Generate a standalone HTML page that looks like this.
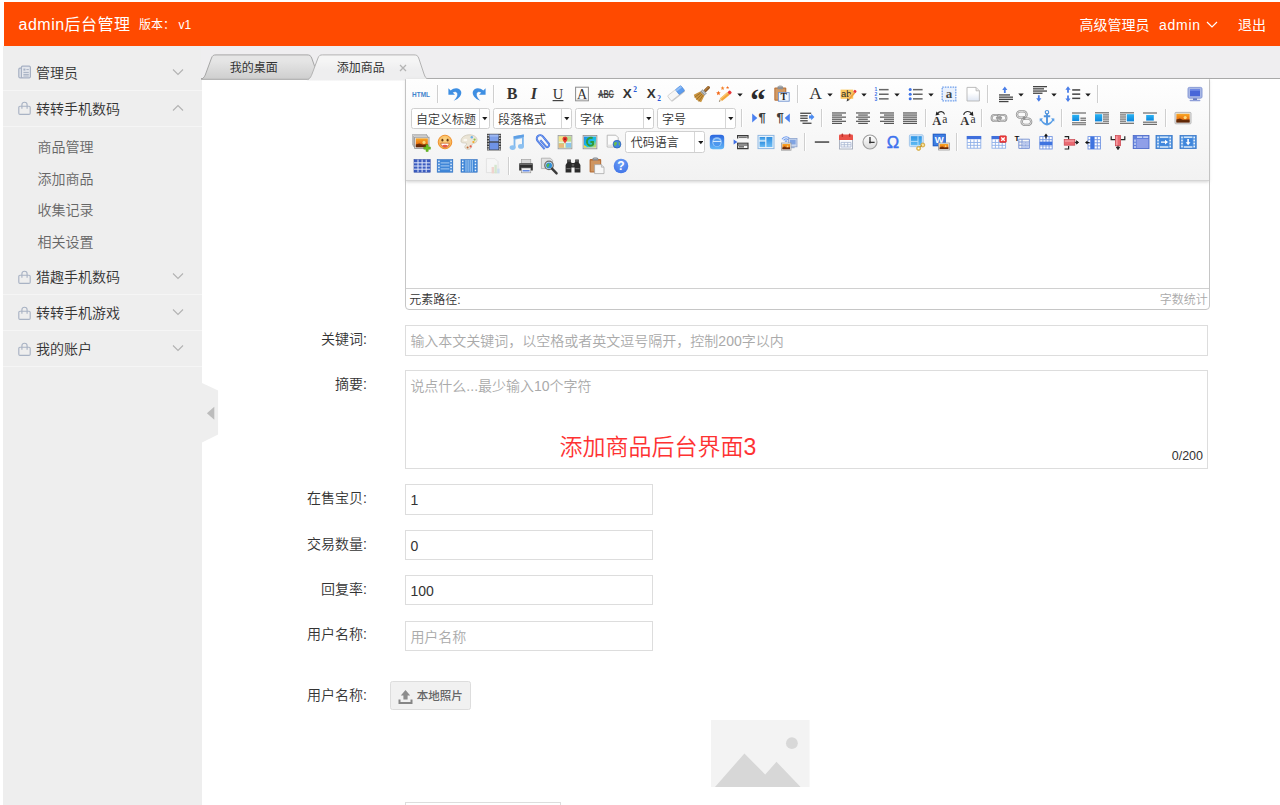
<!DOCTYPE html>
<html lang="zh-CN">
<head>
<meta charset="utf-8">
<title>admin后台管理</title>
<style>
*{box-sizing:border-box;margin:0;padding:0}
html,body{width:1280px;height:805px;overflow:hidden;background:#fff}
body{font-family:"Liberation Sans","Noto Sans CJK SC",sans-serif;font-size:14px;font-weight:350;color:#333;position:relative}
.abs{position:absolute}
/* header */
#hd{font-weight:400;position:absolute;left:3.5px;top:2px;width:1277px;height:43.5px;background:#ff4a00;color:#fff}
#hd .logo{position:absolute;left:15px;top:1px;height:43.5px;line-height:44px;font-size:16px;letter-spacing:.5px;white-space:nowrap}
#hd .ver{position:absolute;left:135.5px;top:1.2px;line-height:44px;font-size:12px;white-space:nowrap}
#hd .usr{position:absolute;top:0.8px;line-height:44px;font-size:14px;white-space:nowrap}
/* sidebar */
#side{position:absolute;left:3.4px;top:45.5px;width:198.2px;height:760px;background:#eeeeee}
#side .dt{position:absolute;left:0;width:100%;height:36px;line-height:36px;border-bottom:1px solid #f5f5f5;color:#333;font-size:14px;white-space:nowrap}
#side .dt span{position:absolute;left:32.6px;top:0}
#side .dt svg.ic{position:absolute;left:15px;top:10.5px}
#side .dt svg.ar{position:absolute;left:169px;top:13px}
#side .dd{position:absolute;left:34px;font-size:14px;color:#666;line-height:20px;white-space:nowrap}
/* tab bar */
#tabbar{position:absolute;left:201.25px;top:45.5px;width:1079px;height:33.8px;background:#efeef0;border-bottom:1px solid #a9a9a9}
#tabbar svg{position:absolute;left:0;top:0}
#tabbar .t{font-weight:400;margin-top:.5px;position:absolute;font-size:12px;line-height:16px;color:#333;white-space:nowrap}
/* content */
.lab{position:absolute;width:120px;text-align:right;font-size:14px;color:#333;line-height:20px;white-space:nowrap}
.inp{position:absolute;border:1px solid #ddd;background:#fff;font-size:14px;line-height:20px;padding:5px 4.2px;color:#333;white-space:nowrap}
.ph{color:#aaa}
</style>
</head>
<body>
<div id="hd">
  <div class="logo">admin后台管理</div>
  <div class="ver">版本：<span style="margin-left:3.5px">v1</span></div>
  <div class="usr" style="left:1076px">高级管理员</div>
  <div class="usr" style="left:1155.5px;letter-spacing:.75px">admin</div>
  <svg class="abs" style="left:1202.6px;top:18.6px" width="12" height="8" viewBox="0 0 12 8"><path d="M1 1 L6 6 L11 1" fill="none" stroke="#fff" stroke-width="1.2"/></svg>
  <div class="usr" style="left:1234.5px">退出</div>
</div>

<div id="side">
  <div class="dt" style="top:9.1px"><svg class="ic" width="13" height="14" viewBox="0 0 13 14"><path d="M4.6 1.2h6.6a1.2 1.2 0 0 1 1.2 1.2v9.2a1.2 1.2 0 0 1 -1.2 1.2h-6.6a1.2 1.2 0 0 1 -1.2 -1.2v-9.2a1.2 1.2 0 0 1 1.2 -1.2z M3.2 3.2h-1.2a1.2 1.2 0 0 0 -1.2 1.2v7.2a1.2 1.2 0 0 0 1.2 1.2h3" fill="#e3e6ec" stroke="#a6b0c3" stroke-width="1.2"/><path d="M5.4 3.6h2v2h-2z" fill="#a6b0c3"/><path d="M8.4 4.6h2.4 M5.4 7.4h5.4 M5.4 9.4h5.4 M5.4 11h5.4" fill="none" stroke="#a6b0c3" stroke-width="1"/></svg><span>管理员</span><svg class="ar" width="12" height="8" viewBox="0 0 12 8"><path d="M1 1.5 L6 6.5 L11 1.5" fill="none" stroke="#b2b2b2" stroke-width="1.1"/></svg></div>
  <div class="dt" style="top:45.1px"><svg class="ic" width="13" height="14" viewBox="0 0 13 14"><path d="M2 5.2h9a1.2 1.2 0 0 1 1.2 1.2v5.8a1.2 1.2 0 0 1 -1.2 1.2h-9a1.2 1.2 0 0 1 -1.2 -1.2v-5.8a1.2 1.2 0 0 1 1.2 -1.2z M3.9 7.8v-4a2.6 2.6 0 0 1 5.2 0v4" fill="none" stroke="#a9b3c4" stroke-width="1.15"/></svg><span>转转手机数码</span><svg class="ar" width="12" height="8" viewBox="0 0 12 8"><path d="M1 6.5 L6 1.5 L11 6.5" fill="none" stroke="#b2b2b2" stroke-width="1.1"/></svg></div>
  <div class="dd" style="top:91.6px">商品管理</div>
  <div class="dd" style="top:123.1px">添加商品</div>
  <div class="dd" style="top:154.6px">收集记录</div>
  <div class="dd" style="top:186.1px">相关设置</div>
  <div class="dt" style="top:213.6px"><svg class="ic" width="13" height="14" viewBox="0 0 13 14"><path d="M2 5.2h9a1.2 1.2 0 0 1 1.2 1.2v5.8a1.2 1.2 0 0 1 -1.2 1.2h-9a1.2 1.2 0 0 1 -1.2 -1.2v-5.8a1.2 1.2 0 0 1 1.2 -1.2z M3.9 7.8v-4a2.6 2.6 0 0 1 5.2 0v4" fill="none" stroke="#a9b3c4" stroke-width="1.15"/></svg><span>猎趣手机数码</span><svg class="ar" width="12" height="8" viewBox="0 0 12 8"><path d="M1 1.5 L6 6.5 L11 1.5" fill="none" stroke="#b2b2b2" stroke-width="1.1"/></svg></div>
  <div class="dt" style="top:249.6px"><svg class="ic" width="13" height="14" viewBox="0 0 13 14"><path d="M2 5.2h9a1.2 1.2 0 0 1 1.2 1.2v5.8a1.2 1.2 0 0 1 -1.2 1.2h-9a1.2 1.2 0 0 1 -1.2 -1.2v-5.8a1.2 1.2 0 0 1 1.2 -1.2z M3.9 7.8v-4a2.6 2.6 0 0 1 5.2 0v4" fill="none" stroke="#a9b3c4" stroke-width="1.15"/></svg><span>转转手机游戏</span><svg class="ar" width="12" height="8" viewBox="0 0 12 8"><path d="M1 1.5 L6 6.5 L11 1.5" fill="none" stroke="#b2b2b2" stroke-width="1.1"/></svg></div>
  <div class="dt" style="top:285.6px"><svg class="ic" width="13" height="14" viewBox="0 0 13 14"><path d="M2 5.2h9a1.2 1.2 0 0 1 1.2 1.2v5.8a1.2 1.2 0 0 1 -1.2 1.2h-9a1.2 1.2 0 0 1 -1.2 -1.2v-5.8a1.2 1.2 0 0 1 1.2 -1.2z M3.9 7.8v-4a2.6 2.6 0 0 1 5.2 0v4" fill="none" stroke="#a9b3c4" stroke-width="1.15"/></svg><span>我的账户</span><svg class="ar" width="12" height="8" viewBox="0 0 12 8"><path d="M1 1.5 L6 6.5 L11 1.5" fill="none" stroke="#b2b2b2" stroke-width="1.1"/></svg></div>
</div>

<div id="tabbar">
  <svg width="300" height="36" viewBox="0 0 300 36">
    <defs><linearGradient id="tg" x1="0" y1="0" x2="0" y2="1"><stop offset="0.25" stop-color="#e5e5e5"/><stop offset="1" stop-color="#cecece"/></linearGradient>
    <linearGradient id="tg2" x1="0" y1="0" x2="0" y2="1"><stop offset="0.25" stop-color="#f5f5f5"/><stop offset="0.6" stop-color="#eeeeef"/></linearGradient></defs>
    <path d="M0.3 33.3 C3 32 4 30 5 27 L10.5 12 C11.5 9.5 12.5 8.9 15 8.9 L106 8.9 C108.5 8.9 109.7 9.5 110.7 12 L116 27 C117 30 118 32 121 33.3 Z" fill="url(#tg)" stroke="#a6a6a6" stroke-width="1"/>
    <path d="M105.5 34.6 C109 33 110 31 111 28 L117 12 C118 9.5 119 8.9 121.5 8.9 L213 8.9 C215.5 8.9 216.7 9.5 217.7 12 L223 28 C224 31 225 33 228.5 34.6 Z" fill="url(#tg2)" stroke="none"/>
    <path d="M107 33.6 C109.5 32 110.3 30 111 28 L117 12 C118 9.5 119 8.9 121.5 8.9 L213 8.9 C215.5 8.9 216.7 9.5 217.7 12 L223 28 C224 31 225 32.5 227.5 33.6" fill="none" stroke="#b3b3b3" stroke-width="1"/>
  </svg>
  <div class="t" style="left:28.5px;top:13.5px">我的桌面</div>
  <div class="t" style="left:135.5px;top:13.5px">添加商品</div>
  <svg style="left:197.5px;top:18px" width="8" height="8" viewBox="0 0 8 8"><path d="M1 1L7 7M7 1L1 7" stroke="#b4b4b4" stroke-width="1.3"/></svg>
</div>

<!-- collapse handle -->
<svg class="abs" style="left:201.5px;top:383px" width="18" height="60" viewBox="0 0 18 60"><path d="M0 0 L16.1 7.6 L16.1 51.6 L0 59.6Z" fill="#eeeeee"/><path d="M12.3 23.7 L4.9 30.2 L12.3 36.7Z" fill="#bcbcbc"/></svg>

<style>
#ed{position:absolute;left:405.1px;top:78.6px;width:804.8px;height:231.2px;border:1px solid #c6c6c6;border-radius:0 0 4px 4px;background:#fff}
#tb{position:absolute;left:406px;top:79.4px;width:803px;height:101.6px;background:linear-gradient(#fefefe,#f2f2f2);border-bottom:1px solid #d4d4d4;box-shadow:0 1px 3px rgba(190,190,190,.7)}
#edbot{position:absolute;left:406px;top:287.6px;width:803px;height:21.4px;border-top:1px solid #d0d0d0;font-size:12px;line-height:17px;color:#333}
.ic{position:absolute;overflow:visible}
.sep{position:absolute;width:1px;height:18px;background:#cfcfcf;box-shadow:1px 0 0 #fff}
.combo{position:absolute;height:21.4px;border:1px solid #d0d0d0;border-radius:2.5px;background:#fff;font-size:12px;line-height:18px;color:#333;white-space:nowrap}
.combo span{position:absolute;left:4.6px;top:2.1px}
.combo b{position:absolute;right:8.8px;top:0;width:1px;height:100%;background:#d6d6d6}
.combo svg{position:absolute;right:0.5px;top:8.8px}
</style>
<svg width="0" height="0" style="position:absolute"><defs><linearGradient id="gdoc" x1="0" y1="0" x2="0" y2="1"><stop offset=".4" stop-color="#fff"/><stop offset="1" stop-color="#dfe6f3"/></linearGradient><linearGradient id="gbl" x1="0" y1="0" x2="0" y2="1"><stop offset="0" stop-color="#29b3f3"/><stop offset="1" stop-color="#0d86dd"/></linearGradient><linearGradient id="gsun" x1="0" y1="0" x2="0" y2="1"><stop offset="0" stop-color="#f9a825"/><stop offset=".55" stop-color="#ee7a14"/><stop offset="1" stop-color="#8a3308"/></linearGradient><radialGradient id="gemo" cx=".5" cy=".35" r=".7"><stop offset="0" stop-color="#fcd98c"/><stop offset="1" stop-color="#f6a540"/></radialGradient><linearGradient id="ggm" x1="0" y1="0" x2="1" y2="1"><stop offset="0" stop-color="#1d8de8"/><stop offset=".6" stop-color="#19c0e8"/><stop offset="1" stop-color="#e8e04a"/></linearGradient><linearGradient id="gwa" x1="0" y1="0" x2="0" y2="1"><stop offset="0" stop-color="#2b66de"/><stop offset="1" stop-color="#63b7f7"/></linearGradient><linearGradient id="gtp" x1="0" y1="0" x2="0" y2="1"><stop offset="0" stop-color="#2f8fe0"/><stop offset="1" stop-color="#6cbcf4"/></linearGradient><linearGradient id="gck" x1="0" y1="0" x2="0" y2="1"><stop offset="0" stop-color="#ffffff"/><stop offset="1" stop-color="#d9d9d9"/></linearGradient><linearGradient id="gsn" x1="0" y1="0" x2="0" y2="1"><stop offset="0" stop-color="#2d94e4"/><stop offset="1" stop-color="#63bdf4"/></linearGradient><radialGradient id="ghp" cx=".5" cy=".3" r=".8"><stop offset="0" stop-color="#6ea0f6"/><stop offset="1" stop-color="#3b6fe6"/></radialGradient></defs></svg>
<div id="ed"></div>
<div id="tb"></div>
<svg class="ic" style="left:411.25px;top:84.20px" width="20" height="20" viewBox="0 0 20 20"><text x="10" y="12.6" font-family="Liberation Sans, sans-serif" font-size="7.6" font-weight="bold" fill="#3f83cc" text-anchor="middle" textLength="17.8" lengthAdjust="spacingAndGlyphs">HTML</text></svg>
<i class="sep" style="left:436.50px;top:85.20px"></i>
<svg class="ic" style="left:444.50px;top:84.20px" width="20" height="20" viewBox="0 0 20 20"><path d="M3.4 4.2 L3.4 10.8 L10 10.8 L7.7 8.5 C9.3 7.2 11.8 7.4 12.4 9.6 C13 12 11.4 14.4 9.2 16.6 C14 14.8 16.9 11.2 16.2 7.8 C15.4 3.9 9.7 2.6 5.7 6.5 Z" fill="#3e8fe3"/><path d="M7.7 8.5 C9.3 7.2 11.8 7.4 12.4 9.6 C13 12 11.4 14.4 9.2 16.6" fill="none" stroke="#2f74c9" stroke-width=".5" opacity=".6"/></svg>
<svg class="ic" style="left:468.50px;top:84.20px" width="20" height="20" viewBox="0 0 20 20"><g transform="translate(20,0) scale(-1,1)"><path d="M3.4 4.2 L3.4 10.8 L10 10.8 L7.7 8.5 C9.3 7.2 11.8 7.4 12.4 9.6 C13 12 11.4 14.4 9.2 16.6 C14 14.8 16.9 11.2 16.2 7.8 C15.4 3.9 9.7 2.6 5.7 6.5 Z" fill="#3e8fe3"/><path d="M7.7 8.5 C9.3 7.2 11.8 7.4 12.4 9.6 C13 12 11.4 14.4 9.2 16.6" fill="none" stroke="#2f74c9" stroke-width=".5" opacity=".6"/></g></svg>
<i class="sep" style="left:493.00px;top:85.20px"></i>
<svg class="ic" style="left:501.50px;top:84.20px" width="20" height="20" viewBox="0 0 20 20"><text x="10" y="15.3" font-family="Liberation Serif, serif" font-size="16" font-weight="bold" fill="#333" text-anchor="middle">B</text></svg>
<svg class="ic" style="left:524.00px;top:84.20px" width="20" height="20" viewBox="0 0 20 20"><text x="9.8" y="15.3" font-family="Liberation Serif, serif" font-size="16" font-weight="bold" font-style="italic" fill="#333" text-anchor="middle">I</text></svg>
<svg class="ic" style="left:548.00px;top:84.20px" width="20" height="20" viewBox="0 0 20 20"><text x="10" y="14.6" font-family="Liberation Serif, serif" font-size="14.5" fill="#333" text-anchor="middle">U</text><rect x="4.6" y="16" width="10.8" height="1.2" fill="#444"/></svg>
<svg class="ic" style="left:571.50px;top:84.20px" width="20" height="20" viewBox="0 0 20 20"><rect x="3.6" y="3.2" width="12.8" height="13.6" fill="#fdfdfd" stroke="#8c8c8c" stroke-width="1"/><rect x="4.6" y="15.2" width="10.8" height="1" fill="#c9c9c9"/><text x="10" y="14.8" font-family="Liberation Serif, serif" font-size="14" fill="#333" text-anchor="middle">A</text></svg>
<svg class="ic" style="left:595.70px;top:84.20px" width="20" height="20" viewBox="0 0 20 20"><text x="10" y="14" font-family="Liberation Sans, sans-serif" font-size="10.8" font-weight="bold" fill="#4a4a4a" text-anchor="middle" textLength="15.6" lengthAdjust="spacingAndGlyphs">ABC</text><rect x="1.8" y="9.8" width="16.4" height="1" fill="#333"/></svg>
<svg class="ic" style="left:619.50px;top:84.20px" width="20" height="20" viewBox="0 0 20 20"><text x="7.2" y="14.4" font-family="Liberation Sans, sans-serif" font-size="12.4" font-weight="bold" fill="#333" text-anchor="middle" textLength="9" lengthAdjust="spacingAndGlyphs">X</text><text x="15.2" y="8.4" font-family="Liberation Serif, serif" font-size="7.4" font-weight="bold" fill="#2456d8" text-anchor="middle">2</text></svg>
<svg class="ic" style="left:643.50px;top:84.20px" width="20" height="20" viewBox="0 0 20 20"><text x="7.2" y="14.4" font-family="Liberation Sans, sans-serif" font-size="12.4" font-weight="bold" fill="#333" text-anchor="middle" textLength="9" lengthAdjust="spacingAndGlyphs">X</text><text x="15.2" y="17" font-family="Liberation Serif, serif" font-size="7.4" font-weight="bold" fill="#2456d8" text-anchor="middle">2</text></svg>
<svg class="ic" style="left:667.00px;top:84.20px" width="20" height="20" viewBox="0 0 20 20"><g transform="rotate(-38 10 10)"><rect x="1.2" y="6.6" width="17" height="6.6" rx="1" fill="#c9c9c9"/><rect x="1.2" y="5.6" width="10.8" height="6.4" rx="1" fill="#f6f6f6" stroke="#c2c2c2" stroke-width=".6"/><rect x="11.4" y="5.6" width="6.8" height="6.4" rx="1" fill="#5d9df0" stroke="#4a86d8" stroke-width=".6"/><rect x="11.4" y="5.9" width="6.6" height="2" fill="#8fbdf7"/></g></svg>
<svg class="ic" style="left:691.50px;top:84.20px" width="20" height="20" viewBox="0 0 20 20"><g transform="rotate(45 10 10)"><rect x="8.5" y="-0.5" width="3" height="7" rx="1.2" fill="#8a5a28"/><rect x="9.1" y="0" width="1" height="6" fill="#b9803c"/><rect x="7" y="6.2" width="6" height="3.4" fill="#8f9499"/><rect x="7" y="7.2" width="6" height=".9" fill="#d7dadd"/><path d="M7 9.6 H13 L15.2 16.4 C13 18.2 7 18.2 4.8 16.4 Z" fill="#c9943f"/><path d="M8.4 10 L7 17.6 M10 10 V18 M11.6 10 L13 17.6" stroke="#9a6a26" stroke-width=".8" fill="none"/></g></svg>
<svg class="ic" style="left:714.00px;top:84.20px" width="20" height="20" viewBox="0 0 20 20"><polygon points="4.40,6.80 5.03,8.33 6.68,8.46 5.43,9.53 5.81,11.14 4.40,10.28 2.99,11.14 3.37,9.53 2.12,8.46 3.77,8.33" fill="#f26a1b"/><polygon points="8.60,2.10 9.16,3.44 10.60,3.55 9.50,4.49 9.83,5.90 8.60,5.15 7.37,5.90 7.70,4.49 6.60,3.55 8.04,3.44" fill="#f5832a"/><polygon points="13.60,1.90 14.05,2.98 15.22,3.07 14.33,3.84 14.60,4.98 13.60,4.37 12.60,4.98 12.87,3.84 11.98,3.07 13.15,2.98" fill="#f26a1b"/><g transform="rotate(-40 10 10)"><rect x="4" y="10.8" width="10" height="3.4" fill="#f3a63a"/><rect x="4" y="10.8" width="10" height="1.2" fill="#f9c772"/><rect x="13.8" y="10.8" width="3.2" height="3.4" rx="1" fill="#e8373b"/><path d="M4 10.8 L1.2 12.5 L4 14.2 Z" fill="#e9c99a"/><path d="M2.3 11.8 L1.2 12.5 L2.3 13.2Z" fill="#555"/></g></svg>
<svg class="ic" style="left:729.50px;top:84.20px" width="20" height="20" viewBox="0 0 20 20"><path d="M7.3 9.4 H12.7 L10 12.6 Z" fill="#1a1a1a"/></svg>
<svg class="ic" style="left:748.00px;top:84.20px" width="20" height="20" viewBox="0 0 20 20"><text x="10" y="26.6" font-family="Liberation Serif, serif" font-size="31" font-weight="bold" fill="#2b2b2b" text-anchor="middle">“</text></svg>
<svg class="ic" style="left:771.50px;top:84.20px" width="20" height="20" viewBox="0 0 20 20"><rect x="2.3" y="3.4" width="12" height="13.4" rx="1" fill="#b9723a"/><rect x="3.4" y="4.6" width="9.8" height="11" fill="#d39a63"/><rect x="5.5" y="2.2" width="5.6" height="3" rx=".8" fill="#8d9094"/><rect x="6.6" y="1.6" width="3.4" height="1.6" rx=".7" fill="#a9acb0"/><rect x="6.4" y="8.6" width="10.8" height="8.6" fill="#f4f7fc" stroke="#6f93cf" stroke-width=".9"/><text x="11.8" y="16.2" font-family="Liberation Serif, serif" font-size="9.6" font-weight="bold" fill="#222" text-anchor="middle">T</text></svg>
<i class="sep" style="left:796.50px;top:85.20px"></i>
<svg class="ic" style="left:805.50px;top:84.20px" width="20" height="20" viewBox="0 0 20 20"><text x="9.6" y="15.2" font-family="Liberation Serif, serif" font-size="17.5" fill="#333" text-anchor="middle">A</text></svg>
<svg class="ic" style="left:819.50px;top:84.20px" width="20" height="20" viewBox="0 0 20 20"><path d="M7.3 9.4 H12.7 L10 12.6 Z" fill="#1a1a1a"/></svg>
<svg class="ic" style="left:838.50px;top:84.20px" width="20" height="20" viewBox="0 0 20 20"><rect x="1.6" y="5.6" width="12.6" height="9.2" fill="#f9c85f"/><text x="7.2" y="13.4" font-family="Liberation Sans, sans-serif" font-size="9.5" fill="#2a2a2a" text-anchor="middle" textLength="10.4" lengthAdjust="spacingAndGlyphs">ab</text><g transform="rotate(-50 13 11)"><rect x="7.5" y="9.6" width="9" height="2.8" fill="#f0a23a"/><rect x="7.5" y="9.6" width="9" height="1" fill="#f8c877"/><rect x="16.3" y="9.6" width="2.6" height="2.8" rx=".8" fill="#e8373b"/><path d="M7.5 9.6 L4.6 11 L7.5 12.4Z" fill="#3a3a3a"/></g></svg>
<svg class="ic" style="left:853.50px;top:84.20px" width="20" height="20" viewBox="0 0 20 20"><path d="M7.3 9.4 H12.7 L10 12.6 Z" fill="#1a1a1a"/></svg>
<svg class="ic" style="left:871.50px;top:84.20px" width="20" height="20" viewBox="0 0 20 20"><g font-family="Liberation Sans, sans-serif" font-size="5" font-weight="bold" fill="#3f74e6" text-anchor="middle"><text x="4" y="7.2">1</text><text x="4" y="11.9">2</text><text x="4" y="16.6">3</text></g><rect x="7" y="4.9" width="9.6" height="1.5" fill="#666"/><rect x="7" y="9.5" width="9.6" height="1.5" fill="#666"/><rect x="7" y="14.1" width="9.6" height="1.5" fill="#666"/></svg>
<svg class="ic" style="left:886.50px;top:84.20px" width="20" height="20" viewBox="0 0 20 20"><path d="M7.3 9.4 H12.7 L10 12.6 Z" fill="#1a1a1a"/></svg>
<svg class="ic" style="left:905.50px;top:84.20px" width="20" height="20" viewBox="0 0 20 20"><circle cx="4.2" cy="5.6" r="1.5" fill="#3f74e6"/><circle cx="4.2" cy="10.2" r="1.5" fill="#3f74e6"/><circle cx="4.2" cy="14.8" r="1.5" fill="#3f74e6"/><rect x="7" y="4.9" width="9.6" height="1.5" fill="#666"/><rect x="7" y="9.5" width="9.6" height="1.5" fill="#666"/><rect x="7" y="14.1" width="9.6" height="1.5" fill="#666"/></svg>
<svg class="ic" style="left:920.50px;top:84.20px" width="20" height="20" viewBox="0 0 20 20"><path d="M7.3 9.4 H12.7 L10 12.6 Z" fill="#1a1a1a"/></svg>
<svg class="ic" style="left:939.00px;top:84.20px" width="20" height="20" viewBox="0 0 20 20"><rect x="3.2" y="3.2" width="13.6" height="13.6" fill="#e9f1fd" stroke="#6d9eea" stroke-width="1.3" stroke-dasharray="1.6 1"/><text x="10" y="14.2" font-family="Liberation Serif, serif" font-size="13" font-weight="bold" fill="#444" text-anchor="middle">a</text></svg>
<svg class="ic" style="left:962.50px;top:84.20px" width="20" height="20" viewBox="0 0 20 20"><path d="M4 3.4 H13 L16.4 6.8 V17 H4 Z" fill="url(#gdoc)" stroke="#b5b5b5" stroke-width=".9"/><path d="M13 3.4 V6.8 H16.4" fill="#e8e8e8" stroke="#b5b5b5" stroke-width=".8"/></svg>
<i class="sep" style="left:987.10px;top:85.20px"></i>
<svg class="ic" style="left:996.00px;top:84.20px" width="20" height="20" viewBox="0 0 20 20"><path d="M8.8 2.4 l2.6 3.6 h-1.7 v3 h-1.8 v-3 h-1.7 z" fill="#4a7ee8"/><rect x="3" y="10.3" width="11" height="1.3" fill="#444"/><rect x="3" y="12.5" width="14" height="1.3" fill="#444"/><rect x="3" y="14.7" width="14" height="1.3" fill="#444"/><rect x="3" y="16.9" width="9.5" height="1.3" fill="#444"/></svg>
<svg class="ic" style="left:1010.50px;top:84.20px" width="20" height="20" viewBox="0 0 20 20"><path d="M7.3 9.4 H12.7 L10 12.6 Z" fill="#1a1a1a"/></svg>
<svg class="ic" style="left:1029.70px;top:84.20px" width="20" height="20" viewBox="0 0 20 20"><rect x="3" y="2" width="14" height="1.3" fill="#444"/><rect x="3" y="4.2" width="11" height="1.3" fill="#444"/><rect x="3" y="6.4" width="14" height="1.3" fill="#444"/><rect x="3" y="8.6" width="9.5" height="1.3" fill="#444"/><path d="M8.8 17.8 l2.6 -3.6 h-1.7 v-3 h-1.8 v3 h-1.7 z" fill="#4a7ee8"/></svg>
<svg class="ic" style="left:1044.00px;top:84.20px" width="20" height="20" viewBox="0 0 20 20"><path d="M7.3 9.4 H12.7 L10 12.6 Z" fill="#1a1a1a"/></svg>
<svg class="ic" style="left:1063.00px;top:84.20px" width="20" height="20" viewBox="0 0 20 20"><path d="M5 2.2 l2.6 3.6 h-1.7 v3 h-1.8 v-3 h-1.7 z" fill="#4a7ee8"/><path d="M5 18 l2.6 -3.6 h-1.7 v-3 h-1.8 v3 h-1.7 z" fill="#4a7ee8"/><rect x="9.2" y="5.2" width="8" height="1.5" fill="#444"/><rect x="9.2" y="9.4" width="8" height="1.5" fill="#444"/><rect x="9.2" y="13.6" width="8" height="1.5" fill="#444"/></svg>
<svg class="ic" style="left:1077.70px;top:84.20px" width="20" height="20" viewBox="0 0 20 20"><path d="M7.3 9.4 H12.7 L10 12.6 Z" fill="#1a1a1a"/></svg>
<i class="sep" style="left:1097.00px;top:85.20px"></i>
<svg class="ic" style="left:1185.00px;top:84.20px" width="20" height="20" viewBox="0 0 20 20"><rect x="3" y="3.4" width="14" height="10.8" rx="1.4" fill="#a9b8e6" stroke="#8093d2" stroke-width=".9"/><rect x="5" y="5.4" width="10" height="6.8" fill="#4866d8"/><rect x="5" y="5.4" width="10" height="1.4" fill="#6f8ae6"/><rect x="8" y="14.4" width="4" height="1.6" fill="#5a6fb8"/><rect x="4.6" y="15.8" width="10.8" height="1.4" rx=".6" fill="#8f9fd8"/></svg>
<i class="sep" style="left:741.00px;top:109.20px"></i>
<svg class="ic" style="left:748.75px;top:108.20px" width="20" height="20" viewBox="0 0 20 20"><path d="M3.2 5.4 L8.3 10 L3.2 14.6 Z" fill="#4a80f0"/><text x="13.0" y="14" font-family="Liberation Sans, sans-serif" font-size="13" font-weight="bold" fill="#3c3c3c" text-anchor="middle">¶</text></svg>
<svg class="ic" style="left:773.00px;top:108.20px" width="20" height="20" viewBox="0 0 20 20"><text x="7.0" y="14" font-family="Liberation Sans, sans-serif" font-size="13" font-weight="bold" fill="#3c3c3c" text-anchor="middle">¶</text><path d="M16.8 5.4 L11.7 10 L16.8 14.6 Z" fill="#4a80f0"/></svg>
<svg class="ic" style="left:796.50px;top:108.20px" width="20" height="20" viewBox="0 0 20 20"><rect x="3.2" y="4.60" width="11.0" height="1.35" fill="#4d4d4d"/><rect x="3.2" y="7.10" width="7.5" height="1.35" fill="#4d4d4d"/><rect x="3.2" y="9.60" width="7.5" height="1.35" fill="#4d4d4d"/><rect x="3.2" y="12.10" width="7.5" height="1.35" fill="#4d4d4d"/><rect x="5.5" y="14.60" width="9.0" height="1.35" fill="#4d4d4d"/><path d="M12 7.4 h2.2 v-1.6 l3.2 3.2 l-3.2 3.2 v-1.6 h-2.2 z" fill="#4a8af0"/></svg>
<i class="sep" style="left:820.75px;top:109.20px"></i>
<svg class="ic" style="left:829.00px;top:108.20px" width="20" height="20" viewBox="0 0 20 20"><rect x="3.0" y="4.40" width="14.0" height="1.15" fill="#4d4d4d"/><rect x="3.0" y="6.48" width="10.0" height="1.15" fill="#4d4d4d"/><rect x="3.0" y="8.56" width="14.0" height="1.15" fill="#4d4d4d"/><rect x="3.0" y="10.64" width="10.0" height="1.15" fill="#4d4d4d"/><rect x="3.0" y="12.72" width="14.0" height="1.15" fill="#4d4d4d"/><rect x="3.0" y="14.80" width="10.0" height="1.15" fill="#4d4d4d"/></svg>
<svg class="ic" style="left:853.00px;top:108.20px" width="20" height="20" viewBox="0 0 20 20"><rect x="3.0" y="4.40" width="14.0" height="1.15" fill="#4d4d4d"/><rect x="5.2" y="6.48" width="9.6" height="1.15" fill="#4d4d4d"/><rect x="3.0" y="8.56" width="14.0" height="1.15" fill="#4d4d4d"/><rect x="5.2" y="10.64" width="9.6" height="1.15" fill="#4d4d4d"/><rect x="3.0" y="12.72" width="14.0" height="1.15" fill="#4d4d4d"/><rect x="5.2" y="14.80" width="9.6" height="1.15" fill="#4d4d4d"/></svg>
<svg class="ic" style="left:876.50px;top:108.20px" width="20" height="20" viewBox="0 0 20 20"><rect x="3.0" y="4.40" width="14.0" height="1.15" fill="#4d4d4d"/><rect x="7.0" y="6.48" width="10.0" height="1.15" fill="#4d4d4d"/><rect x="3.0" y="8.56" width="14.0" height="1.15" fill="#4d4d4d"/><rect x="7.0" y="10.64" width="10.0" height="1.15" fill="#4d4d4d"/><rect x="3.0" y="12.72" width="14.0" height="1.15" fill="#4d4d4d"/><rect x="7.0" y="14.80" width="10.0" height="1.15" fill="#4d4d4d"/></svg>
<svg class="ic" style="left:900.00px;top:108.20px" width="20" height="20" viewBox="0 0 20 20"><rect x="3.0" y="4.40" width="14.0" height="1.15" fill="#4d4d4d"/><rect x="3.0" y="6.48" width="14.0" height="1.15" fill="#4d4d4d"/><rect x="3.0" y="8.56" width="14.0" height="1.15" fill="#4d4d4d"/><rect x="3.0" y="10.64" width="14.0" height="1.15" fill="#4d4d4d"/><rect x="3.0" y="12.72" width="14.0" height="1.15" fill="#4d4d4d"/><rect x="3.0" y="14.80" width="14.0" height="1.15" fill="#4d4d4d"/></svg>
<i class="sep" style="left:925.10px;top:109.20px"></i>
<svg class="ic" style="left:930.00px;top:108.20px" width="20" height="20" viewBox="0 0 20 20"><text x="6.8" y="16.8" font-family="Liberation Serif, serif" font-size="12.5" font-weight="bold" fill="#333" text-anchor="middle">A</text><text x="14.8" y="14.6" font-family="Liberation Serif, serif" font-size="11.5" fill="#333" text-anchor="middle">a</text><path d="M14.5 6.4 C13.8 3.2 9.6 2.6 7.6 5.4" fill="none" stroke="#333" stroke-width="1.1"/><path d="M5.6 7.6 L6.4 3.6 L9.8 6.4 Z" fill="#222"/></svg>
<svg class="ic" style="left:957.50px;top:108.20px" width="20" height="20" viewBox="0 0 20 20"><text x="6.8" y="16.8" font-family="Liberation Serif, serif" font-size="12.5" font-weight="bold" fill="#333" text-anchor="middle">A</text><text x="15" y="15.2" font-family="Liberation Serif, serif" font-size="11.5" fill="#333" text-anchor="middle">a</text><path d="M5.6 6.8 C6.6 3 11.4 2.4 13.4 5.6" fill="none" stroke="#333" stroke-width="1.1"/><path d="M15.4 8 L11.2 6.6 L14.8 3.6 Z" fill="#222"/></svg>
<i class="sep" style="left:981.40px;top:109.20px"></i>
<svg class="ic" style="left:989.00px;top:108.20px" width="20" height="20" viewBox="0 0 20 20"><rect x="2.6" y="7" width="8.8" height="5.8" rx="2.9" fill="none" stroke="#8e8e8e" stroke-width="2"/><rect x="2.6" y="7" width="8.8" height="5.8" rx="2.9" fill="none" stroke="#dcdcdc" stroke-width=".8"/><rect x="8.6" y="7" width="8.8" height="5.8" rx="2.9" fill="none" stroke="#8e8e8e" stroke-width="2"/><rect x="8.6" y="7" width="8.8" height="5.8" rx="2.9" fill="none" stroke="#dcdcdc" stroke-width=".8"/><rect x="6.8" y="9.1" width="6.4" height="1.7" rx=".8" fill="#9a9a9a"/></svg>
<svg class="ic" style="left:1013.50px;top:108.20px" width="20" height="20" viewBox="0 0 20 20"><rect x="3" y="3.4" width="9.6" height="6.2" rx="3.1" fill="none" stroke="#8e8e8e" stroke-width="2.3"/><rect x="3" y="3.4" width="9.6" height="6.2" rx="3.1" fill="none" stroke="#dedede" stroke-width="1"/><rect x="7.6" y="10.6" width="9.6" height="6.2" rx="3.1" fill="none" stroke="#8e8e8e" stroke-width="2.3"/><rect x="7.6" y="10.6" width="9.6" height="6.2" rx="3.1" fill="none" stroke="#dedede" stroke-width="1"/><path d="M9.6 8.6 L10.6 11.6" stroke="#8e8e8e" stroke-width="2.2" fill="none"/></svg>
<svg class="ic" style="left:1036.75px;top:108.20px" width="20" height="20" viewBox="0 0 20 20"><circle cx="10" cy="4.2" r="1.7" fill="none" stroke="#4f94de" stroke-width="1.2"/><path d="M10 5.8 V16.4 M6.8 8.2 H13.2" stroke="#4f94de" stroke-width="1.9" fill="none"/><path d="M2.6 10.4 L5.8 10.2 L4.9 11.9 C6 14 7.8 15 10 15.2 C12.2 15 14 14 15.1 11.9 L14.2 10.2 L17.4 10.4 L17.2 13.8 L16.2 12.8 C14.8 15.6 12.6 17.2 10 17.4 C7.4 17.2 5.2 15.6 3.8 12.8 L2.8 13.8 Z" fill="#5b9fe6"/></svg>
<i class="sep" style="left:1061.40px;top:109.20px"></i>
<svg class="ic" style="left:1069.25px;top:108.20px" width="20" height="20" viewBox="0 0 20 20"><rect x="3.2" y="6.8" width="7" height="6.2" fill="url(#gbl)"/><rect x="3.0" y="4.40" width="14.0" height="1.20" fill="#6b6b6b"/><rect x="11.4" y="9.60" width="5.6" height="1.20" fill="#6b6b6b"/><rect x="11.4" y="11.70" width="5.6" height="1.20" fill="#6b6b6b"/><rect x="3.0" y="14.20" width="14.0" height="1.20" fill="#6b6b6b"/><rect x="3.0" y="16.20" width="14.0" height="1.00" fill="#6b6b6b"/></svg>
<svg class="ic" style="left:1092.00px;top:108.20px" width="20" height="20" viewBox="0 0 20 20"><rect x="3" y="6.2" width="7.2" height="7.2" fill="url(#gbl)"/><rect x="3.0" y="4.20" width="14.0" height="1.20" fill="#6b6b6b"/><rect x="11.0" y="6.30" width="6.0" height="1.20" fill="#6b6b6b"/><rect x="11.0" y="8.40" width="6.0" height="1.20" fill="#6b6b6b"/><rect x="11.0" y="10.50" width="6.0" height="1.20" fill="#6b6b6b"/><rect x="11.0" y="12.60" width="6.0" height="1.20" fill="#6b6b6b"/><rect x="3.0" y="14.70" width="14.0" height="1.20" fill="#6b6b6b"/></svg>
<svg class="ic" style="left:1117.00px;top:108.20px" width="20" height="20" viewBox="0 0 20 20"><rect x="9.8" y="6.2" width="7.2" height="7.2" fill="url(#gbl)"/><rect x="3.0" y="4.20" width="14.0" height="1.20" fill="#6b6b6b"/><rect x="3.0" y="6.30" width="6.0" height="1.20" fill="#6b6b6b"/><rect x="3.0" y="8.40" width="6.0" height="1.20" fill="#6b6b6b"/><rect x="3.0" y="10.50" width="6.0" height="1.20" fill="#6b6b6b"/><rect x="3.0" y="12.60" width="6.0" height="1.20" fill="#6b6b6b"/><rect x="3.0" y="14.70" width="14.0" height="1.20" fill="#6b6b6b"/></svg>
<svg class="ic" style="left:1140.25px;top:108.20px" width="20" height="20" viewBox="0 0 20 20"><rect x="6.2" y="7" width="7.6" height="5.6" fill="url(#gbl)"/><rect x="3.0" y="4.40" width="14.0" height="1.20" fill="#6b6b6b"/><rect x="3.0" y="13.60" width="14.0" height="1.20" fill="#6b6b6b"/><rect x="3.0" y="15.80" width="14.0" height="1.20" fill="#6b6b6b"/></svg>
<i class="sep" style="left:1164.90px;top:109.20px"></i>
<svg class="ic" style="left:1173.00px;top:108.20px" width="20" height="20" viewBox="0 0 20 20"><rect x="2" y="4.4" width="16" height="11.4" rx=".8" fill="#e6e6e6" stroke="#a8a8a8" stroke-width=".8"/><rect x="3.4" y="5.8" width="13.2" height="8.6" fill="url(#gsun)"/><circle cx="12.2" cy="9.6" r="1.6" fill="#fde38a" opacity=".9"/><path d="M3.4 11.6 L7 10.6 L10 12 L16.6 11.4 V14.4 H3.4 Z" fill="#4a1d06" opacity=".75"/></svg>
<svg class="ic" style="left:411.25px;top:132.20px" width="20" height="20" viewBox="0 0 20 20"><rect x="1.6" y="2.4" width="14" height="10.6" fill="#f3f3f3" stroke="#b0b0b0" stroke-width=".8"/><rect x="2.6" y="3.8" width="14" height="10.6" fill="#ededed" stroke="#a6a6a6" stroke-width=".8"/><rect x="3.6" y="5.2" width="14.4" height="11.2" fill="#e4e4e4" stroke="#8f8f8f" stroke-width=".8"/><rect x="4.8" y="6.4" width="12.0" height="8.8" fill="url(#gsun)"/><circle cx="13.0" cy="10.4" r="1.6" fill="#fde38a" opacity=".85"/><path d="M4.8 12.6 l3.6 -1 l3.6 1.2 l4.8 -.6 V15.2 H4.8 Z" fill="#4a1d06" opacity=".7"/><path d="M15 12.8 h2.2 v2.2 h2.2 v2.2 h-2.2 v2.2 h-2.2 v-2.2 h-2.2 v-2.2 h2.2 z" fill="#6cc024" stroke="#4f9a14" stroke-width=".5"/></svg>
<svg class="ic" style="left:435.30px;top:132.20px" width="20" height="20" viewBox="0 0 20 20"><circle cx="10" cy="10" r="6.8" fill="url(#gemo)" stroke="#ef8a22" stroke-width=".9"/><ellipse cx="7.4" cy="8.2" rx="1" ry="1.4" fill="#6a3a10"/><ellipse cx="12.6" cy="8.2" rx="1" ry="1.4" fill="#6a3a10"/><path d="M5.8 11.2 H14.2 C14 14.2 12.2 15.4 10 15.4 C7.8 15.4 6 14.2 5.8 11.2 Z" fill="#fff" stroke="#c2561a" stroke-width=".7"/><path d="M7 13.4 C8.6 12.6 11.4 12.6 13 13.4 C12.2 14.8 11.2 15.2 10 15.2 C8.8 15.2 7.8 14.8 7 13.4Z" fill="#e8584a"/></svg>
<svg class="ic" style="left:459.00px;top:132.20px" width="20" height="20" viewBox="0 0 20 20"><path d="M2 9.2 C2 5 6.4 2.6 11 2.8 C15.6 3 18.4 5.6 18 8.6 C17.6 11.4 14.4 11 13.2 12.2 C12 13.4 13.6 15.4 11.4 16.8 C9 18.2 5.6 17 5.8 14.6 C6 12.8 8 13 7.6 11.6 C7.2 10.2 2 12 2 9.2 Z" fill="#ebe5d6" stroke="#c9c2b0" stroke-width=".7"/><circle cx="12.8" cy="5.2" r="1.2" fill="#6db3e8"/><circle cx="15.6" cy="7.6" r="1.1" fill="#8bc34a"/><circle cx="14.4" cy="10" r="1.1" fill="#f5a623"/><circle cx="11.6" cy="14.4" r="1.1" fill="#e8584a"/><circle cx="8.6" cy="15.4" r="1" fill="#c06a3a"/><ellipse cx="6.4" cy="8" rx="2" ry="1.3" fill="#faf8f2"/></svg>
<svg class="ic" style="left:484.00px;top:132.20px" width="20" height="20" viewBox="0 0 20 20"><rect x="3" y="1.8" width="14" height="16.6" fill="#3a3a3a"/><rect x="3.5" y="2.8" width="1.3" height="1.4" fill="#e8e8e8"/><rect x="3.5" y="5.6" width="1.3" height="1.4" fill="#e8e8e8"/><rect x="3.5" y="8.4" width="1.3" height="1.4" fill="#e8e8e8"/><rect x="3.5" y="11.2" width="1.3" height="1.4" fill="#e8e8e8"/><rect x="3.5" y="14.0" width="1.3" height="1.4" fill="#e8e8e8"/><rect x="3.5" y="16.4" width="1.3" height="1.4" fill="#e8e8e8"/><rect x="15.2" y="2.8" width="1.3" height="1.4" fill="#e8e8e8"/><rect x="15.2" y="5.6" width="1.3" height="1.4" fill="#e8e8e8"/><rect x="15.2" y="8.4" width="1.3" height="1.4" fill="#e8e8e8"/><rect x="15.2" y="11.2" width="1.3" height="1.4" fill="#e8e8e8"/><rect x="15.2" y="14.0" width="1.3" height="1.4" fill="#e8e8e8"/><rect x="15.2" y="16.4" width="1.3" height="1.4" fill="#e8e8e8"/><rect x="5.5" y="2.6" width="9" height="6.8" fill="#7fa0ea"/><rect x="5.5" y="10.6" width="9" height="7" fill="#6f93e6"/><rect x="5.5" y="2.6" width="9" height="2" fill="#9db8f2"/></svg>
<svg class="ic" style="left:507.40px;top:132.20px" width="20" height="20" viewBox="0 0 20 20"><path d="M6.6 4.2 L16.8 2.4 V14.6 H15 V6.2 L8.4 7.4 V15.8 H6.6 Z" fill="#7db7ee"/><ellipse cx="5.6" cy="15.6" rx="3" ry="2.4" fill="#8cc0f0"/><ellipse cx="14" cy="14.4" rx="3" ry="2.4" fill="#8cc0f0"/><path d="M6.6 4.2 L16.8 2.4 V5 L6.6 6.8 Z" fill="#5f9fe4"/></svg>
<svg class="ic" style="left:532.80px;top:132.20px" width="20" height="20" viewBox="0 0 20 20"><g transform="rotate(-40 10 10)"><path d="M6.6 16.5 V5.6 a3.4 3.4 0 0 1 6.8 0 V14.8 a2.1 2.1 0 0 1 -4.2 0 V6.8" fill="none" stroke="#3f6fe0" stroke-width="2"/><path d="M6.6 16.5 V5.6 a3.4 3.4 0 0 1 6.8 0 V14.8 a2.1 2.1 0 0 1 -4.2 0 V6.8" fill="none" stroke="#86aaf2" stroke-width=".7"/></g></svg>
<svg class="ic" style="left:555.00px;top:132.20px" width="20" height="20" viewBox="0 0 20 20"><rect x="3.1" y="3.4" width="13.8" height="13.4" fill="#dcdcdc" stroke="#9a9a9a" stroke-width=".8"/><rect x="3.8" y="4.4" width="12.4" height="11.2" fill="#b9dc8a"/><rect x="3.8" y="4.4" width="5" height="5" fill="#f4e58c"/><rect x="11" y="10" width="5.2" height="5.6" fill="#8cc6ea"/><rect x="3.8" y="11.6" width="5.4" height="4" fill="#e9b97a"/><path d="M3.8 10.2 H16.2 M9.8 4.4 V15.6" stroke="#fff" stroke-width="1"/><path d="M10 4.6 a2.5 2.5 0 0 1 2.5 2.5 c0 1.6 -1.6 2.6 -2.5 4.6 c-.9 -2 -2.5 -3 -2.5 -4.6 a2.5 2.5 0 0 1 2.5 -2.5z" fill="#e8382e"/><circle cx="10" cy="7.1" r=".9" fill="#7a130d"/></svg>
<svg class="ic" style="left:580.00px;top:132.20px" width="20" height="20" viewBox="0 0 20 20"><rect x="3.1" y="3.4" width="13.8" height="13.4" fill="#dcdcdc" stroke="#8f8f8f" stroke-width=".8"/><rect x="4" y="4.6" width="12" height="10.8" fill="url(#ggm)"/><path d="M12.6 6 C9 5 6.4 7.6 7 10.6 C7.6 13.6 11 14.6 13 12.6 L13 10 H10.4" fill="none" stroke="#2f9a3a" stroke-width="1.9"/><path d="M4 13 L8 15.4 H4Z" fill="#f2e23a"/></svg>
<svg class="ic" style="left:604.40px;top:132.20px" width="20" height="20" viewBox="0 0 20 20"><path d="M3.2 3.2 H11.8 L14.2 5.6 V15 H3.2 Z" fill="#fbfbfb" stroke="#a9a9a9" stroke-width=".8"/><rect x="3.6" y="12.6" width="10.2" height="2" fill="#e3e3e3"/><g transform="translate(-1,-1.4)"><circle cx="14" cy="13.6" r="3.9" fill="#3f86e0" stroke="#2b5fae" stroke-width=".7"/><path d="M11.4 12 C12.6 10.8 14.2 11.6 14 13 C13.8 14.4 12.4 14.2 12.2 15.8 C11 15 10.6 13.2 11.4 12Z M15.4 11 C16.8 11.8 17.4 13.4 16.8 15 C16 14.6 15.4 13.4 15.8 12.4Z" fill="#6cc04a"/></g></svg>
<svg class="ic" style="left:707.20px;top:132.20px" width="20" height="20" viewBox="0 0 20 20"><rect x="2.8" y="2.8" width="14.4" height="14.4" rx="3.2" fill="url(#gwa)"/><circle cx="10" cy="10" r="4.8" fill="#a8d2fa" opacity=".85"/><circle cx="10" cy="10.6" r="3.6" fill="#4d97ee"/><path d="M6 9.4 H14" stroke="#e6f3ff" stroke-width="1"/></svg>
<svg class="ic" style="left:731.00px;top:132.20px" width="20" height="20" viewBox="0 0 20 20"><path d="M6.6 6.6 V3.6 H17 V6.6" fill="#e9e9e9" stroke="#3a3a3a" stroke-width="1.2"/><rect x="7.8" y="4.6" width="8" height="1.4" fill="#777"/><path d="M6.6 13.2 V16.6 H17 V13.2" fill="none" stroke="#3a3a3a" stroke-width="1.2"/><rect x="6.6" y="11.2" width="10.4" height="1.8" fill="none" stroke="#3a3a3a" stroke-width="1.1"/><rect x="8" y="14.2" width="5" height="1.3" fill="#555"/><path d="M2.6 7.4 L6.4 10 L2.6 12.6 Z" fill="#3f6fe6"/></svg>
<svg class="ic" style="left:755.75px;top:132.20px" width="20" height="20" viewBox="0 0 20 20"><rect x="2" y="3.4" width="16" height="13.2" fill="#e8f2fb" stroke="#8fb8e2" stroke-width="1"/><rect x="3.6" y="5" width="5.6" height="3.4" fill="url(#gtp)"/><rect x="3.6" y="9.6" width="5.6" height="5.4" fill="url(#gtp)"/><rect x="10.4" y="5" width="6" height="10" fill="url(#gtp)"/></svg>
<svg class="ic" style="left:779.00px;top:132.20px" width="20" height="20" viewBox="0 0 20 20"><path d="M3 7.2 C5 4 9.4 4 11.2 7.2" fill="none" stroke="#6d9cf0" stroke-width="1.1"/><path d="M4.6 8.4 C5.8 6.4 8.4 6.4 9.6 8.4" fill="none" stroke="#6d9cf0" stroke-width="1.1"/><path d="M6 9.6 C6.6 8.6 7.6 8.6 8.2 9.6" fill="none" stroke="#6d9cf0" stroke-width="1.1"/><rect x="9.6" y="6.4" width="8.4" height="8.4" fill="#c9d6ee" stroke="#8ea4cc" stroke-width=".8"/><rect x="11" y="7.8" width="5.6" height="4.6" fill="#7fa3e2"/><rect x="12" y="15" width="3.6" height="1.2" fill="#9aaed2"/><rect x="2.4" y="11" width="9.6" height="7.2" fill="#efefef" stroke="#9d9d9d" stroke-width=".8"/><rect x="3.4" y="12.0" width="7.6" height="5.2" fill="url(#gsun)"/><circle cx="8.6" cy="14.3" r="0.9" fill="#fde38a" opacity=".85"/><path d="M3.4 15.6 l2.3 -1 l2.3 1.2 l3.0 -.6 V17.2 H3.4 Z" fill="#4a1d06" opacity=".7"/></svg>
<i class="sep" style="left:804.25px;top:133.20px"></i>
<svg class="ic" style="left:812.20px;top:132.20px" width="20" height="20" viewBox="0 0 20 20"><rect x="2.8" y="9.3" width="14.4" height="1.5" fill="#444"/></svg>
<svg class="ic" style="left:836.00px;top:132.20px" width="20" height="20" viewBox="0 0 20 20"><rect x="3.4" y="6" width="13.2" height="11" fill="#fafbfd" stroke="#9aa3b5" stroke-width=".8"/><path d="M3 3.6 a1 1 0 0 1 1 -1 H16 a1 1 0 0 1 1 1 V8 H3 Z" fill="#ea5148"/><rect x="5.6" y="1.6" width="1.5" height="3.4" rx=".7" fill="#b9322b"/><rect x="12.9" y="1.6" width="1.5" height="3.4" rx=".7" fill="#b9322b"/><path d="M5 10.4 H15 V15 H5 Z M5 12.7 H15 M8.3 10.4 V15 M11.7 10.4 V15" fill="none" stroke="#a8b6d2" stroke-width=".8"/></svg>
<svg class="ic" style="left:859.70px;top:132.20px" width="20" height="20" viewBox="0 0 20 20"><circle cx="10" cy="10" r="7" fill="url(#gck)" stroke="#9e9e9e" stroke-width="1.1"/><path d="M10 5 V10.4 H14.6" fill="none" stroke="#333" stroke-width="1.3"/><circle cx="10" cy="10.4" r="1" fill="#333"/></svg>
<svg class="ic" style="left:883.40px;top:132.20px" width="20" height="20" viewBox="0 0 20 20"><text x="10" y="16" font-family="Liberation Sans, sans-serif" font-size="16.6" fill="#3d72ee" stroke="#3d72ee" stroke-width=".45" text-anchor="middle">Ω</text></svg>
<svg class="ic" style="left:907.00px;top:132.20px" width="20" height="20" viewBox="0 0 20 20"><rect x="2.4" y="2.8" width="13.8" height="11.8" rx="1.2" fill="#d6e8f8" stroke="#9cc3ea" stroke-width=".9"/><rect x="3.8" y="4.2" width="11" height="9" fill="url(#gsn)"/><path d="M11 4.2 V9.4 H3.8 M11 9.4 V13.2" fill="none" stroke="#bfe2fb" stroke-width=".9"/><circle cx="11.6" cy="16.4" r="2" fill="#f6d77a" stroke="#c99a2e" stroke-width=".8"/><circle cx="15.8" cy="13" r="2" fill="#f6d77a" stroke="#c99a2e" stroke-width=".8"/><path d="M12.8 15 L15 13.6" stroke="#c99a2e" stroke-width="1.2"/><circle cx="11.6" cy="16.4" r=".6" fill="#fff"/><circle cx="15.8" cy="13" r=".6" fill="#fff"/></svg>
<svg class="ic" style="left:930.75px;top:132.20px" width="20" height="20" viewBox="0 0 20 20"><rect x="2" y="2" width="12.6" height="12" fill="#2e6fda" stroke="#1f55b5" stroke-width=".6"/><rect x="3" y="3" width="10.6" height="10" fill="#3f7de2"/><text x="8.3" y="11.4" font-family="Liberation Sans, sans-serif" font-size="9.5" font-weight="bold" fill="#fff" text-anchor="middle">W</text><rect x="7.6" y="11" width="10.8" height="7" fill="#eee" stroke="#9a9a9a" stroke-width=".8"/><rect x="8.6" y="12.0" width="8.8" height="5.0" fill="url(#gsun)"/><circle cx="14.6" cy="14.2" r="0.9" fill="#fde38a" opacity=".85"/><path d="M8.6 15.5 l2.6 -1 l2.6 1.2 l3.5 -.6 V17.0 H8.6 Z" fill="#4a1d06" opacity=".7"/></svg>
<i class="sep" style="left:955.75px;top:133.20px"></i>
<svg class="ic" style="left:964.00px;top:132.20px" width="20" height="20" viewBox="0 0 20 20"><rect x="3.2" y="4.4" width="13.6" height="11.8" fill="#fff" stroke="#8fb0e8" stroke-width=".9"/><rect x="2.8" y="4.0" width="14.4" height="3.2" fill="#3f6fdc"/><path d="M6.60 7.6 V16.2 M10.00 7.6 V16.2 M13.40 7.6 V16.2 M3.2 10.47 H16.8 M3.2 13.33 H16.8 " stroke="#8fb0e8" stroke-width=".9" fill="none"/></svg>
<svg class="ic" style="left:989.00px;top:132.20px" width="20" height="20" viewBox="0 0 20 20"><rect x="3.0" y="4.4" width="13.6" height="11.8" fill="#fff" stroke="#8fb0e8" stroke-width=".9"/><rect x="2.6" y="4.0" width="14.4" height="3.2" fill="#3f6fdc"/><path d="M6.40 7.6 V16.2 M9.80 7.6 V16.2 M13.20 7.6 V16.2 M3.0 10.47 H16.6 M3.0 13.33 H16.6 " stroke="#8fb0e8" stroke-width=".9" fill="none"/><rect x="10.6" y="3.8" width="6.8" height="6.6" rx=".8" fill="#ee3b3b" stroke="#c71f1f" stroke-width=".5"/><path d="M12.2 5.4 L15.8 8.8 M15.8 5.4 L12.2 8.8" stroke="#fff" stroke-width="1.4"/></svg>
<svg class="ic" style="left:1011.50px;top:132.20px" width="20" height="20" viewBox="0 0 20 20"><text x="5" y="9" font-family="Liberation Sans, sans-serif" font-size="8" font-weight="bold" fill="#111" text-anchor="middle">T</text><path d="M6.8 7.2 H17.4 V16.4 H6.8 Z M6.8 10 H17.4 M6.8 13.2 H17.4 M10 7.2 V16.4 M13.7 10 V16.4" fill="none" stroke="#7f98d6" stroke-width="1"/><rect x="10.5" y="10.5" width="6.4" height="2.2" fill="#b9c8ee"/><rect x="10.5" y="13.7" width="6.4" height="2.2" fill="#b9c8ee"/></svg>
<svg class="ic" style="left:1036.40px;top:132.20px" width="20" height="20" viewBox="0 0 20 20"><rect x="3.8" y="4.6" width="12.4" height="12.4" fill="#fff" stroke="#6f93e2" stroke-width=".9"/><path d="M6.90 4.6 V17.0 M10.00 4.6 V17.0 M13.10 4.6 V17.0 M3.8 7.70 H16.2 M3.8 10.80 H16.2 M3.8 13.90 H16.2 " stroke="#6f93e2" stroke-width=".9" fill="none"/><rect x="3.8" y="9.6" width="12.4" height="3.4" fill="#3f74e0"/><path d="M10 1.6 L12 4.2 H10.6 V6.4 H9.4 V4.2 H8 Z" fill="#111"/></svg>
<svg class="ic" style="left:1060.50px;top:132.20px" width="20" height="20" viewBox="0 0 20 20"><path d="M3.6 4.6 H7.6 V7.6 M3.6 17 H7.6 V14" fill="none" stroke="#222" stroke-width="1.2"/><rect x="3.2" y="7.6" width="10.6" height="5.6" fill="#ea6a72" stroke="#c9444e" stroke-width=".7"/><rect x="3.8" y="8.2" width="9.4" height="1.6" fill="#f39aa0"/><path d="M13.8 10.4 H16 M15.4 8.8 L17.6 10.4 L15.4 12 Z" stroke="#222" stroke-width="1" fill="#222"/></svg>
<svg class="ic" style="left:1083.30px;top:132.20px" width="20" height="20" viewBox="0 0 20 20"><rect x="5.0" y="4.6" width="12.4" height="12.4" fill="#fff" stroke="#6f93e2" stroke-width=".9"/><path d="M8.10 4.6 V17.0 M11.20 4.6 V17.0 M14.30 4.6 V17.0 M5.0 7.70 H17.4 M5.0 10.80 H17.4 M5.0 13.90 H17.4 " stroke="#6f93e2" stroke-width=".9" fill="none"/><rect x="7.4" y="4.6" width="3.8" height="12.4" fill="#3f74e0"/><path d="M2 10.6 L4.6 8.6 V10 H6.6 V11.2 H4.6 V12.6 Z" fill="#111"/></svg>
<svg class="ic" style="left:1107.50px;top:132.20px" width="20" height="20" viewBox="0 0 20 20"><path d="M3.2 4.2 V7.6 H7.4 M16.8 4.2 V7.6 H12.6" fill="none" stroke="#222" stroke-width="1.2"/><rect x="7.4" y="3.6" width="5.2" height="10.2" fill="#ea6a72" stroke="#c9444e" stroke-width=".7"/><rect x="8" y="4.2" width="1.6" height="9" fill="#f39aa0"/><path d="M10 13.8 V16 M8.4 15.2 L10 17.6 L11.6 15.2 Z" stroke="#222" stroke-width="1" fill="#222"/></svg>
<svg class="ic" style="left:1130.75px;top:132.20px" width="20" height="20" viewBox="0 0 20 20"><rect x="2.2" y="3.4" width="15.8" height="13.2" fill="#5f7fdc" stroke="#4a68c8" stroke-width=".8"/><rect x="5.6" y="7" width="11.8" height="9" fill="#8f9fe8"/><path d="M6 5.2 H11.2 M12.2 5.2 H17.2" stroke="#e6ecfb" stroke-width="1.2"/><path d="M4 7.6 V9.8 M4 10.8 V13 M4 14 V16" stroke="#e6ecfb" stroke-width="1.2"/></svg>
<svg class="ic" style="left:1154.40px;top:132.20px" width="20" height="20" viewBox="0 0 20 20"><rect x="2" y="3.4" width="16.2" height="13.2" fill="#4d90de" stroke="#3a78c8" stroke-width=".8"/><rect x="3.2" y="4.6" width="1.6" height="1.8" fill="#eaf3fc"/><rect x="3.2" y="7.6" width="1.6" height="1.8" fill="#eaf3fc"/><rect x="3.2" y="10.6" width="1.6" height="1.8" fill="#eaf3fc"/><rect x="3.2" y="13.6" width="1.6" height="1.8" fill="#eaf3fc"/><rect x="15.4" y="4.6" width="1.6" height="1.8" fill="#eaf3fc"/><rect x="15.4" y="7.6" width="1.6" height="1.8" fill="#eaf3fc"/><rect x="15.4" y="10.6" width="1.6" height="1.8" fill="#eaf3fc"/><rect x="15.4" y="13.6" width="1.6" height="1.8" fill="#eaf3fc"/><rect x="5.8" y="4.4" width="8.6" height="1.6" fill="#cfe3f7"/><rect x="5.8" y="14.2" width="8.6" height="1.6" fill="#cfe3f7"/><rect x="5.8" y="6.6" width="8.6" height="7" fill="#3f86dc"/><path d="M7 9.4 H11 V7.8 L14 10.1 L11 12.4 V10.8 H7 Z" fill="#fff"/></svg>
<svg class="ic" style="left:1178.00px;top:132.20px" width="20" height="20" viewBox="0 0 20 20"><rect x="2" y="3.4" width="16.2" height="13.2" fill="#4d90de" stroke="#3a78c8" stroke-width=".8"/><rect x="3.2" y="4.6" width="1.6" height="1.8" fill="#eaf3fc"/><rect x="3.2" y="7.6" width="1.6" height="1.8" fill="#eaf3fc"/><rect x="3.2" y="10.6" width="1.6" height="1.8" fill="#eaf3fc"/><rect x="3.2" y="13.6" width="1.6" height="1.8" fill="#eaf3fc"/><rect x="15.4" y="4.6" width="1.6" height="1.8" fill="#eaf3fc"/><rect x="15.4" y="7.6" width="1.6" height="1.8" fill="#eaf3fc"/><rect x="15.4" y="10.6" width="1.6" height="1.8" fill="#eaf3fc"/><rect x="15.4" y="13.6" width="1.6" height="1.8" fill="#eaf3fc"/><rect x="5.8" y="4.4" width="8.6" height="1.6" fill="#cfe3f7"/><rect x="5.8" y="14.2" width="8.6" height="1.6" fill="#cfe3f7"/><rect x="5.8" y="6.6" width="8.6" height="7" fill="#3f86dc"/><path d="M9.3 7 H10.9 V10.2 H12.5 L10.1 13.2 L7.7 10.2 H9.3 Z" fill="#fff"/></svg>
<svg class="ic" style="left:411.75px;top:156.00px" width="20" height="20" viewBox="0 0 20 20"><rect x="2" y="3.6" width="16.2" height="12.6" fill="#3b5cc0" stroke="#2e4aa6" stroke-width=".6"/><path d="M2 6.8 H18.2 M2 10 H18.2 M2 13.2 H18.2 M6 3.6 V16.2 M10.1 3.6 V16.2 M14.2 3.6 V16.2" stroke="#dfe6fa" stroke-width="1"/></svg>
<svg class="ic" style="left:435.30px;top:156.00px" width="20" height="20" viewBox="0 0 20 20"><rect x="2.2" y="3.6" width="15.6" height="12.6" fill="#3f86d8" stroke="#2f6fc0" stroke-width=".6"/><rect x="3.2" y="4.6" width="1.5" height="1.6" fill="#eaf3fc"/><rect x="3.2" y="7.6" width="1.5" height="1.6" fill="#eaf3fc"/><rect x="3.2" y="10.6" width="1.5" height="1.6" fill="#eaf3fc"/><rect x="3.2" y="13.6" width="1.5" height="1.6" fill="#eaf3fc"/><rect x="15.3" y="4.6" width="1.5" height="1.6" fill="#eaf3fc"/><rect x="15.3" y="7.6" width="1.5" height="1.6" fill="#eaf3fc"/><rect x="15.3" y="10.6" width="1.5" height="1.6" fill="#eaf3fc"/><rect x="15.3" y="13.6" width="1.5" height="1.6" fill="#eaf3fc"/><path d="M5.6 6.9 H14.4 M5.6 9.9 H14.4 M5.6 12.9 H14.4" stroke="#a8cdf2" stroke-width="1"/></svg>
<svg class="ic" style="left:459.00px;top:156.00px" width="20" height="20" viewBox="0 0 20 20"><rect x="2" y="3.6" width="16.2" height="12.6" fill="#3f86d8" stroke="#2f6fc0" stroke-width=".6"/><rect x="3.0" y="4.6" width="1.5" height="1.6" fill="#eaf3fc"/><rect x="3.0" y="7.6" width="1.5" height="1.6" fill="#eaf3fc"/><rect x="3.0" y="10.6" width="1.5" height="1.6" fill="#eaf3fc"/><rect x="3.0" y="13.6" width="1.5" height="1.6" fill="#eaf3fc"/><rect x="15.7" y="4.6" width="1.5" height="1.6" fill="#eaf3fc"/><rect x="15.7" y="7.6" width="1.5" height="1.6" fill="#eaf3fc"/><rect x="15.7" y="10.6" width="1.5" height="1.6" fill="#eaf3fc"/><rect x="15.7" y="13.6" width="1.5" height="1.6" fill="#eaf3fc"/><path d="M7 4 V15.8 M9.1 4 V15.8 M11.2 4 V15.8 M13.3 4 V15.8" stroke="#a8cdf2" stroke-width="1"/></svg>
<svg class="ic" style="left:483.00px;top:156.00px" width="20" height="20" viewBox="0 0 20 20"><g opacity=".35"><path d="M3.4 2.6 H12 L15 5.6 V16.6 H3.4 Z" fill="#fafafa" stroke="#b9b9b9" stroke-width=".8"/><rect x="8.6" y="11" width="2.4" height="6.4" fill="#e89a8a"/><rect x="11.4" y="8.8" width="2.4" height="8.6" fill="#9ccf8a"/><rect x="14.2" y="12.6" width="2.4" height="4.8" fill="#8ab8e8"/></g></svg>
<i class="sep" style="left:508.00px;top:157.00px"></i>
<svg class="ic" style="left:515.60px;top:156.00px" width="20" height="20" viewBox="0 0 20 20"><rect x="5.4" y="3.4" width="9.4" height="4.4" fill="#d9d9d9" stroke="#9a9a9a" stroke-width=".6"/><path d="M3.2 8.2 a1 1 0 0 1 1 -1 H15.8 a1 1 0 0 1 1 1 V14.4 H3.2 Z" fill="#2f2f2f"/><rect x="3.2" y="7.4" width="13.6" height="1.6" fill="#6a6a6a"/><rect x="5.4" y="12" width="9.4" height="4.8" fill="#f2f2f2" stroke="#8a8a8a" stroke-width=".6"/><rect x="6.6" y="14.2" width="7" height="1.2" fill="#3f6fe0"/></svg>
<svg class="ic" style="left:539.00px;top:156.00px" width="20" height="20" viewBox="0 0 20 20"><path d="M2.4 2.2 H11.4 L13.6 4.4 V12.6 H2.4 Z" fill="#e2e2e2" stroke="#a8a8a8" stroke-width=".8"/><circle cx="10" cy="9.4" r="4.2" fill="#d8ecfb" stroke="#6a6a6a" stroke-width="1.3"/><circle cx="10" cy="9.4" r="3" fill="#2f8fd8"/><path d="M8 8.4 C9 7 10.6 7.4 10.4 8.8 C10.2 10 9 10.4 9.2 11.8 C8 11.2 7.4 9.6 8 8.4Z" fill="#57b947"/><path d="M13 12.6 L17.6 17.4" stroke="#3a3a3a" stroke-width="2.4" stroke-linecap="round"/></svg>
<svg class="ic" style="left:562.80px;top:156.00px" width="20" height="20" viewBox="0 0 20 20"><path d="M4.2 3.6 H7.8 V6 L8.8 7 H11.2 L12.2 6 V3.6 H15.8 V6.4 L17.4 9 V16.4 H11.6 V11.4 H8.4 V16.4 H2.6 V9 L4.2 6.4 Z" fill="#2a2a2a"/><rect x="3.4" y="12" width="4.2" height="1.2" fill="#666"/><rect x="12.4" y="12" width="4.2" height="1.2" fill="#666"/><rect x="4.8" y="4.4" width="2.4" height="1" fill="#777"/><rect x="12.8" y="4.4" width="2.4" height="1" fill="#777"/><rect x="8.8" y="8" width="2.4" height="2.4" fill="#555"/></svg>
<svg class="ic" style="left:586.50px;top:156.00px" width="20" height="20" viewBox="0 0 20 20"><rect x="2.6" y="3" width="11.6" height="13.6" rx="1" fill="#b6703a"/><rect x="3.8" y="4.6" width="9.2" height="10.8" fill="#cf9560"/><rect x="5.6" y="1.8" width="5.6" height="2.8" rx=".8" fill="#8d9094"/><rect x="6.8" y="1.2" width="3.2" height="1.6" rx=".7" fill="#aeb1b5"/><path d="M7.6 8.6 H14.4 L17 11.2 V17.6 H7.6 Z" fill="#f7f7f7" stroke="#a2a2a2" stroke-width=".7"/><path d="M14.4 8.6 V11.2 H17" fill="#dedede" stroke="#a2a2a2" stroke-width=".6"/></svg>
<svg class="ic" style="left:611.00px;top:156.00px" width="20" height="20" viewBox="0 0 20 20"><circle cx="10" cy="10" r="7.3" fill="url(#ghp)"/><text x="10" y="14.4" font-family="Liberation Sans, sans-serif" font-size="12" font-weight="bold" fill="#fff" text-anchor="middle">?</text></svg>
<div class="combo" style="left:410.50px;top:107.70px;width:79.00px"><span>自定义标题</span><b></b><svg width="5.6" height="3.4" viewBox="0 0 5.6 3.4"><path d="M0.2 0.1H5.4L2.8 3.3Z" fill="#1a1a1a"/></svg></div>
<div class="combo" style="left:492.50px;top:107.70px;width:79.00px"><span>段落格式</span><b></b><svg width="5.6" height="3.4" viewBox="0 0 5.6 3.4"><path d="M0.2 0.1H5.4L2.8 3.3Z" fill="#1a1a1a"/></svg></div>
<div class="combo" style="left:574.50px;top:107.70px;width:79.00px"><span>字体</span><b></b><svg width="5.6" height="3.4" viewBox="0 0 5.6 3.4"><path d="M0.2 0.1H5.4L2.8 3.3Z" fill="#1a1a1a"/></svg></div>
<div class="combo" style="left:656.50px;top:107.70px;width:79.00px"><span>字号</span><b></b><svg width="5.6" height="3.4" viewBox="0 0 5.6 3.4"><path d="M0.2 0.1H5.4L2.8 3.3Z" fill="#1a1a1a"/></svg></div>
<div class="combo" style="left:625.20px;top:131.40px;width:79.50px"><span>代码语言</span><b></b><svg width="5.6" height="3.4" viewBox="0 0 5.6 3.4"><path d="M0.2 0.1H5.4L2.8 3.3Z" fill="#1a1a1a"/></svg></div>
<div id="edbot"><span style="position:absolute;left:3.2px;top:3.4px">元素路径:</span><span style="position:absolute;right:1.2px;top:3.2px;color:#aaa">字数统计</span></div>

<div class="lab" style="left:247px;top:328.6px">关键词:</div>
<div class="inp" style="left:405.2px;top:325.2px;width:803px;height:30.4px"><span class="ph">输入本文关键词，以空格或者英文逗号隔开，控制200字以内</span></div>

<div class="lab" style="left:247px;top:374.4px">摘要:</div>
<div class="inp" style="left:405.2px;top:370.2px;width:803px;height:98.6px"><span class="ph">说点什么...最少输入10个字符</span></div>
<div class="abs" style="left:1150px;top:446px;width:53px;text-align:right;font-size:12.5px;line-height:20px;color:#333">0/200</div>
<div class="abs" style="left:559.5px;top:430px;font-size:23px;line-height:34px;color:#fe3232;white-space:nowrap">添加商品后台界面3</div>

<div class="lab" style="left:247px;top:488.0px">在售宝贝:</div>
<div class="inp" style="left:405.2px;top:484.4px;width:248px;height:30.2px">1</div>
<div class="lab" style="left:247px;top:533.6px">交易数量:</div>
<div class="inp" style="left:405.2px;top:529.6px;width:248px;height:30.2px">0</div>
<div class="lab" style="left:247px;top:579.2px">回复率:</div>
<div class="inp" style="left:405.2px;top:575.2px;width:248px;height:30.2px">100</div>
<div class="lab" style="left:247px;top:624.2px">用户名称:</div>
<div class="inp" style="left:405.2px;top:620.8px;width:248px;height:30.2px"><span class="ph">用户名称</span></div>

<div class="lab" style="left:247px;top:685.0px">用户名称:</div>
<div class="abs" style="left:390.2px;top:681px;width:80.8px;height:29.2px;border:1px solid #ddd;border-radius:2.5px;background:#f1f1f1">
  <svg class="abs" style="left:6.6px;top:6.6px" width="15" height="16" viewBox="0 0 15 16"><path d="M7.5 1 L12.2 6.4 H9.6 V10.4 H5.4 V6.4 H2.8 Z" fill="#8c8c8c"/><path d="M1.5 10.4 V14 H13.5 V10.4" fill="none" stroke="#868686" stroke-width="2"/></svg>
  <span class="abs" style="left:25.6px;top:5.4px;font-size:11.5px;line-height:18px;font-weight:500;color:#666;white-space:nowrap">本地照片</span>
</div>
<svg class="abs" style="left:711px;top:720.2px" width="98.6" height="67" viewBox="0 0 98.6 67"><rect width="98.6" height="67" fill="#f3f3f3"/><circle cx="80.9" cy="23.2" r="5.9" fill="#d8d8d8"/><path d="M4 67 L33.4 33.5 L54.2 54.4 L65.5 41.8 L89.6 67 Z" fill="#d7d7d7"/></svg>
<div class="inp" style="left:405.2px;top:801.8px;width:155.4px;height:30px"></div>

</body>
</html>
